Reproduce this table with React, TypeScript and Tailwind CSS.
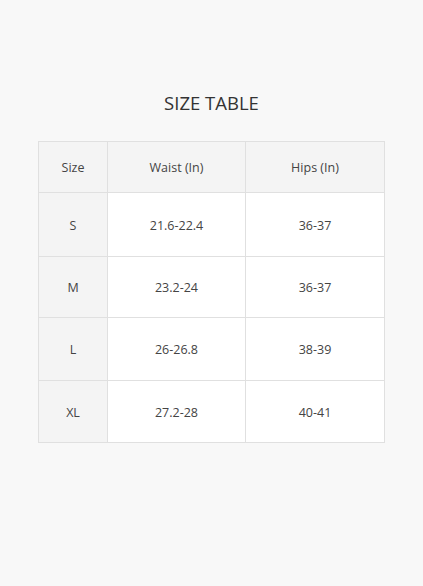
const rows = [
  { size: 'S', waist: '21.6-22.4', hips: '36-37', h: 'h-[64px]' },
  { size: 'M', waist: '23.2-24', hips: '36-37', h: 'h-[61px]' },
  { size: 'L', waist: '26-26.8', hips: '38-39', h: 'h-[63px]' },
  { size: 'XL', waist: '27.2-28', hips: '40-41', h: 'h-[62px]' },
];

export default function App() {
  return (
    <div className="w-[423px] h-[586px] bg-[#f8f8f8] font-['Open_Sans',sans-serif] text-[#333] pt-[90px]">
      <h2 className="text-center text-[18.5px] leading-[26px] text-[#333]">SIZE TABLE</h2>
      <table className="mt-[25px] ml-[38px] border-collapse table-fixed text-[12.5px] text-[#444]">
        <colgroup>
          <col className="w-[69px]" />
          <col className="w-[138px]" />
          <col className="w-[139px]" />
        </colgroup>
        <thead>
          <tr className="h-[51px] bg-[#f4f4f4]">
            <th className="border border-[#e0e0e0] font-normal pt-[2px]">Size</th>
            <th className="border border-[#e0e0e0] font-normal pt-[2px]">Waist (In)</th>
            <th className="border border-[#e0e0e0] font-normal pt-[2px]">Hips (In)</th>
          </tr>
        </thead>
        <tbody>
          {rows.map((r) => (
            <tr key={r.size} className={r.h}>
              <td className="border border-[#e0e0e0] bg-[#f4f4f4] text-center pt-[3px]">{r.size}</td>
              <td className="border border-[#e0e0e0] bg-white text-center pt-[3px]">{r.waist}</td>
              <td className="border border-[#e0e0e0] bg-white text-center pt-[3px]">{r.hips}</td>
            </tr>
          ))}
        </tbody>
      </table>
    </div>
  );
}
